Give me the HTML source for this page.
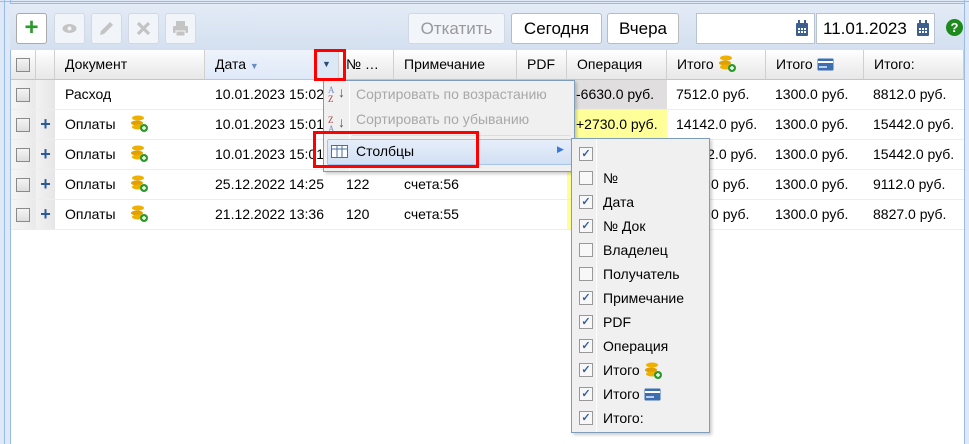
<!DOCTYPE html>
<html><head><meta charset="utf-8">
<style>
*{box-sizing:border-box;margin:0;padding:0}
body{width:969px;height:444px;overflow:hidden;background:#dfe8f6;font-family:"Liberation Sans",Arial,sans-serif;font-size:14px;color:#000;position:relative}
.a{position:absolute}
.tb{left:10px;top:3px;width:954px;height:47px;background:linear-gradient(#e3ebf6,#d4e0f0);border-top:1px solid #99bbe8}
.ib{position:absolute;top:13px;width:31px;height:31px;border:1px solid #d3d9e2;border-radius:3px;background:#f1f4f8}
.btn{position:absolute;top:13px;height:31px;border:1px solid #bbb;border-radius:3px;background:#fff;font-size:17px;line-height:29px;text-align:center}
.grid{left:11px;top:50px;width:953px;height:394px;background:#fff}
.hd{position:absolute;top:0;height:30px;border-right:1px solid #d0d0d0;background:linear-gradient(#fff,#f0f0f0 60%,#e8e8e8);border-bottom:1px solid #c5c5c5;line-height:28px;padding-left:10px;font-size:14px;color:#000;white-space:nowrap}
.row{position:absolute;left:0;width:953px;height:30px;border-bottom:1px solid #ededed}
.c{position:absolute;top:0;height:29px;line-height:29px;white-space:nowrap;font-size:14px}
.cb{position:absolute;width:14px;height:14px;border:1px solid #8a8a8a;background:linear-gradient(#f4f4f4,#ddd)}
.plus{color:#2a5a9a;font-weight:bold;font-size:18px}
.menu{left:323px;top:80px;width:252px;height:92px;background:#f0f0f0;border:1px solid #7f9db9;box-shadow:2px 2px 3px rgba(0,0,0,.2)}
.mi{position:absolute;left:28px;color:#a8a8a8;font-size:14px}
.sub{left:571px;top:138px;width:139px;height:295px;background:#f0f0f0;border:1px solid #7f9db9;box-shadow:2px 2px 3px rgba(0,0,0,.2)}
.si{position:absolute;left:0;height:24px;width:137px;font-size:14px;line-height:24px}
.si .cb{left:7px;top:5px;background:#f8f8f8;border-color:#999}
.si span{position:absolute;left:31px}
.chk{color:#3a5aa0;font-size:11px;line-height:12px;text-align:center;font-weight:bold}
.red{position:absolute;border:3px solid #f00}
</style></head><body>
<div class="a" style="left:0;top:0;width:969px;height:2px;background:#dfe8f6;border-bottom:1px solid #99bbe8"></div>
<div class="a" style="left:4px;top:0;width:1px;height:444px;background:#99bbe8"></div>
<div class="a" style="left:10px;top:0;width:1px;height:444px;background:#99bbe8"></div>
<div class="a" style="left:964px;top:0;width:1px;height:444px;background:#99bbe8"></div>
<div class="a tb"></div>
<div class="ib" style="left:16px;background:#fff;border-color:#aaa;color:#2a9a2a;font-size:24px;font-weight:bold;line-height:27px;text-align:center">+</div>
<div class="ib" style="left:54px"><svg width="29" height="29"><ellipse cx="14.5" cy="14.5" rx="7" ry="4.5" fill="#c4c4c4"/><circle cx="14.5" cy="14.5" r="2" fill="#f1f4f8"/></svg></div>
<div class="ib" style="left:91px"><svg width="29" height="29"><path d="M8 21l1-4 9-9 3 3-9 9z" fill="#c4c4c4"/></svg></div>
<div class="ib" style="left:128px"><svg width="29" height="29"><path d="M9 9l11 11M20 9L9 20" stroke="#c4c4c4" stroke-width="3.2"/></svg></div>
<div class="ib" style="left:165px"><svg width="29" height="29"><rect x="10" y="7" width="9" height="5" fill="#c4c4c4"/><rect x="7" y="12" width="15" height="7" rx="1" fill="#c4c4c4"/><rect x="10" y="17" width="9" height="5" fill="#c4c4c4" stroke="#f1f4f8"/></svg></div>
<div class="btn" style="left:408px;width:97px;background:#f2f5f9;border-color:#d3d9e2;color:#999">Откатить</div>
<div class="btn" style="left:511px;width:91px">Сегодня</div>
<div class="btn" style="left:607px;width:72px">Вчера</div>
<div class="btn" style="left:696px;width:119px;border-color:#b8c3d2;border-radius:0"></div>
<div class="btn" style="left:816px;width:119px;border-color:#b8c3d2;border-radius:0;text-align:left;padding-left:6px">11.01.2023</div>
<svg class="a" style="left:795px;top:20px" width="14" height="17"><rect x="1" y="3" width="12" height="13" rx="1" fill="#3d5f8f"/><rect x="3" y="0" width="2" height="4" fill="#3d5f8f"/><rect x="9" y="0" width="2" height="4" fill="#3d5f8f"/><g fill="#fff"><rect x="3" y="8" width="2" height="2"/><rect x="6" y="8" width="2" height="2"/><rect x="9" y="8" width="2" height="2"/><rect x="3" y="11" width="2" height="2"/><rect x="6" y="11" width="2" height="2"/><rect x="9" y="11" width="2" height="2"/></g></svg>
<svg class="a" style="left:916px;top:20px" width="14" height="17"><rect x="1" y="3" width="12" height="13" rx="1" fill="#3d5f8f"/><rect x="3" y="0" width="2" height="4" fill="#3d5f8f"/><rect x="9" y="0" width="2" height="4" fill="#3d5f8f"/><g fill="#fff"><rect x="3" y="8" width="2" height="2"/><rect x="6" y="8" width="2" height="2"/><rect x="9" y="8" width="2" height="2"/><rect x="3" y="11" width="2" height="2"/><rect x="6" y="11" width="2" height="2"/><rect x="9" y="11" width="2" height="2"/></g></svg>
<div class="a" style="left:946px;top:19px;width:17px;height:17px;border-radius:50%;background:#1e8a1e;color:#fff;font-weight:bold;font-size:13px;line-height:17px;text-align:center">?</div>

<div class="a grid">
<div class="hd" style="left:0;width:25px"><div class="cb" style="left:5px;top:8px"></div></div>
<div class="hd" style="left:25px;width:19px"></div>
<div class="hd" style="left:44px;width:150px">Документ</div>
<div class="hd" style="left:194px;width:110px;background:linear-gradient(#eef3fb,#dfe9f7)">Дата <span style="color:#6b8fc4;font-size:9px">▼</span></div>
<div class="hd" style="left:304px;width:24px;background:#dde8f6;padding-left:7px;color:#2a4a7a;font-size:9px">▼</div>
<div class="hd" style="left:328px;width:55px;padding-left:7px">№ …</div>
<div class="hd" style="left:383px;width:123px">Примечание</div>
<div class="hd" style="left:506px;width:50px">PDF</div>
<div class="hd" style="left:556px;width:100px">Операция</div>
<div class="hd" style="left:656px;width:99px">Итого <svg width="18" height="18" style="vertical-align:-3px"><ellipse cx="8" cy="4" rx="6" ry="2.5" fill="#f0b000"/><ellipse cx="7" cy="9" rx="6" ry="2.5" fill="#e0a000"/><ellipse cx="8" cy="13" rx="6" ry="2.5" fill="#f0b000"/><circle cx="14" cy="14" r="4" fill="#2a9a2a"/><path d="M12 14h4M14 12v4" stroke="#fff" stroke-width="1.4"/></svg></div>
<div class="hd" style="left:755px;width:98px">Итого <svg width="17" height="13" style="vertical-align:-2px"><rect x="0.5" y="0.5" width="16" height="12" rx="1" fill="#3d6fb0"/><rect x="1" y="3" width="15" height="2" fill="#fff"/><rect x="2" y="8" width="8" height="2" fill="#b8d0ee"/></svg></div>
<div class="hd" style="left:853px;width:100px">Итого:</div>
</div>

<div id="rows"></div>
<script>
var data=[["","Расход","10.01.2023 15:02","","","-6630.0 руб.","7512.0 руб.","8812.0 руб.",0],
["+","Оплаты","10.01.2023 15:01","","","+2730.0 руб.","14142.0 руб.","15442.0 руб.",1],
["+","Оплаты","10.01.2023 15:01","","","","14142.0 руб.","15442.0 руб.",1],
["+","Оплаты","25.12.2022 14:25","122","счета:56","","7812.0 руб.","9112.0 руб.",1],
["+","Оплаты","21.12.2022 13:36","120","счета:55","","7527.0 руб.","8827.0 руб.",1]];
var coin='<svg width="18" height="18" style="vertical-align:-3px;margin-left:14px"><ellipse cx="8" cy="4" rx="6" ry="2.5" fill="#f0b000"/><ellipse cx="7" cy="9" rx="6" ry="2.5" fill="#e0a000"/><ellipse cx="8" cy="13" rx="6" ry="2.5" fill="#f0b000"/><circle cx="14" cy="14" r="4" fill="#2a9a2a"/><path d="M12 14h4M14 12v4" stroke="#fff" stroke-width="1.4"/></svg>';
var h='';
data.forEach(function(d,i){
var t=80+i*30;
h+='<div class="a row" style="left:11px;top:'+t+'px">';
h+='<div class="c" style="left:0;width:25px;background:linear-gradient(90deg,#f6f6f6,#e9e9e9)"><div class="cb" style="left:5px;top:8px"></div></div>';
h+='<div class="c" style="left:25px;width:19px;background:linear-gradient(90deg,#f2f2f2,#e6e6e6);text-align:center"><span class="plus">'+d[0]+'</span></div>';
h+='<div class="c" style="left:54px">'+d[1]+(d[8]?coin:'')+'</div>';
h+='<div class="c" style="left:204px">'+d[2]+'</div>';
h+='<div class="c" style="left:335px">'+d[3]+'</div>';
h+='<div class="c" style="left:393px">'+d[4]+'</div>';
var bg=i==0?'#e0dede':'#ffff99';
h+='<div class="c" style="left:556px;width:100px;background:'+bg+';padding-left:9px">'+d[5]+'</div>';
h+='<div class="c" style="left:665px">'+d[6]+'</div>';
h+='<div class="c" style="left:764px">1300.0 руб.</div>';
h+='<div class="c" style="left:862px">'+d[7]+'</div>';
h+='</div>';});
document.getElementById('rows').innerHTML=h;
</script>

<div class="a menu">
<div class="a" style="left:25px;top:0;width:1px;height:90px;background:#e0e0e0;border-right:1px solid #fff"></div>
<div class="a" style="left:4px;top:5px;font-size:9px;line-height:9px;color:#7a90c0;font-family:'Liberation Serif',serif">A<br><span style="color:#a04040">Z</span></div><div class="a" style="left:14px;top:3px;color:#555">↓</div>
<div class="a" style="left:4px;top:35px;font-size:9px;line-height:9px;color:#a04040;font-family:'Liberation Serif',serif">Z<br><span style="color:#7a90c0">A</span></div><div class="a" style="left:14px;top:33px;color:#555">↓</div>
<div class="mi" style="top:5px;left:32px">Сортировать по возрастанию</div>
<div class="mi" style="top:30px;left:32px">Сортировать по убыванию</div>
<div class="a" style="left:28px;top:54px;width:218px;height:1px;background:#ddd"></div>
<div class="a" style="left:3px;top:58px;width:245px;height:26px;border:1px solid #a8c4ea;background:linear-gradient(#e6eefa,#d2e0f4);border-radius:2px"></div>
<svg class="a" style="left:7px;top:64px" width="17" height="13"><rect x=".5" y=".5" width="16" height="12" fill="#fff" stroke="#4a6fa5"/><path d="M1 4h15M6 1v11M11 1v11" stroke="#4a6fa5"/></svg>
<div class="a" style="left:32px;top:62px;font-size:14px">Столбцы</div>
<div class="a" style="left:233px;top:63px;color:#3b78d8;font-size:9px">▶</div>
</div>

<div class="a sub">
<div class="a" style="left:24px;top:0;width:1px;height:293px;background:#e0e0e0;border-right:1px solid #fff"></div>
<div id="si"></div>
</div>
<script>
var items=[[1,""],[0,"№"],[1,"Дата"],[1,"№ Док"],[0,"Владелец"],[0,"Получатель"],[1,"Примечание"],[1,"PDF"],[1,"Операция"],[1,"Итого c"],[1,"Итого k"],[1,"Итого:"]];
var s='';
items.forEach(function(it,i){
var lbl=it[1].replace(" c",' <svg width="18" height="18" style="vertical-align:-4px"><ellipse cx="8" cy="4" rx="6" ry="2.5" fill="#f0b000"/><ellipse cx="7" cy="9" rx="6" ry="2.5" fill="#e0a000"/><ellipse cx="8" cy="13" rx="6" ry="2.5" fill="#f0b000"/><circle cx="14" cy="14" r="4" fill="#2a9a2a"/><path d="M12 14h4M14 12v4" stroke="#fff" stroke-width="1.4"/></svg>').replace(" k",' <svg width="17" height="13" style="vertical-align:-2px"><rect x="0.5" y="0.5" width="16" height="12" rx="1" fill="#3d6fb0"/><rect x="1" y="3" width="15" height="2" fill="#fff"/><rect x="2" y="8" width="8" height="2" fill="#b8d0ee"/></svg>');
s+='<div class="si" style="top:'+(3+i*24)+'px"><div class="cb chk">'+(it[0]?'✓':'')+'</div><span>'+lbl+'</span></div>';});
document.getElementById('si').innerHTML=s;
</script>

<div class="red" style="left:314px;top:49px;width:32px;height:32px"></div>
<div class="red" style="left:313px;top:131px;width:166px;height:37px"></div>
</body></html>
